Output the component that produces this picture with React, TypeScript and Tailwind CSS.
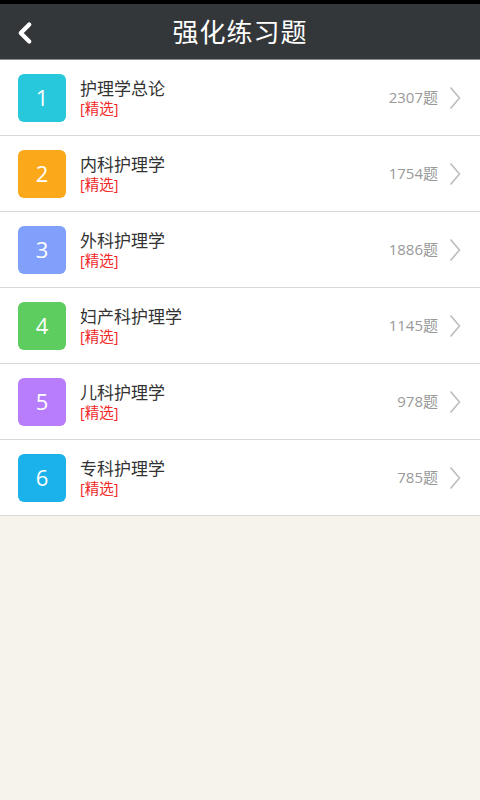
import { ChevronLeft } from 'lucide-react';

const ITEMS = [
  { n: 1, name: '护理学总论',   count: 2307, color: 'bg-[#28c8dc]' },
  { n: 2, name: '内科护理学',   count: 1754, color: 'bg-[#fba91a]' },
  { n: 3, name: '外科护理学',   count: 1886, color: 'bg-[#80a0fc]' },
  { n: 4, name: '妇产科护理学', count: 1145, color: 'bg-[#5ccd5e]' },
  { n: 5, name: '儿科护理学',   count: 978,  color: 'bg-[#b87dfc]' },
  { n: 6, name: '专科护理学',   count: 785,  color: 'bg-[#1bb2ec]' },
];

const FONT = "font-['Open_Sans','Noto_Sans_CJK_SC',sans-serif]";

function Chevron() {
  return (
    <svg width="12" height="24" viewBox="0 0 12 24" className="shrink-0">
      <path d="M1.5 1.5 L10.5 12 L1.5 22.5" fill="none" stroke="#bdbdbd" strokeWidth="1.6" />
    </svg>
  );
}

export default function App() {
  return (
    <div className={`w-[480px] h-[800px] flex flex-col bg-[#f6f3ec] ${FONT}`}>
      <div className="h-[4px] bg-black" />
      <header className="relative h-[56px] bg-[#33373a] flex items-center justify-center border-b border-[#8c8e8f]">
        <ChevronLeft className="absolute left-[8px] top-[12px] text-white" size={34} strokeWidth={3} />
        <h1 className="text-white text-[26px] tracking-[1px] leading-none">强化练习题</h1>
      </header>

      <ul className="bg-white">
        {ITEMS.map((it) => (
          <li key={it.n} className="h-[76px] flex items-center border-b border-[#d8d8d8] pl-[18px] pr-[19px]">
            <div className={`w-[48px] h-[48px] rounded-[6px] ${it.color} text-white text-[22px] flex items-center justify-center`}>
              {it.n}
            </div>
            <div className="ml-[14px] flex-1 flex flex-col pt-[1px]">
              <span className="text-[#333] text-[17px] leading-[22px]">{it.name}</span>
              <span className="text-[#f02828] text-[14.5px] leading-[18px]">[精选]</span>
            </div>
            <span className="text-[#999] text-[15px] mr-[11px]">{it.count}题</span>
            <Chevron />
          </li>
        ))}
      </ul>
    </div>
  );
}
